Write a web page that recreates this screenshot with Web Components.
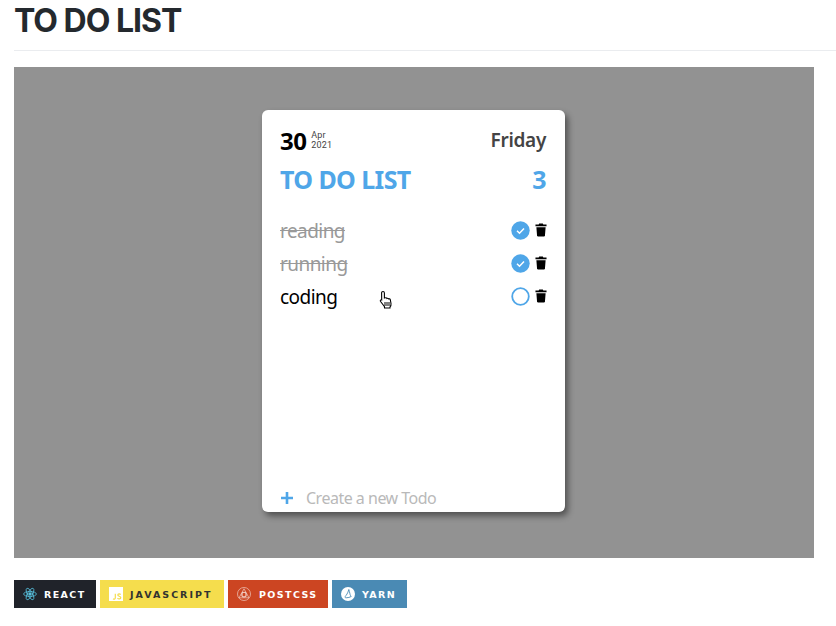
<!DOCTYPE html>
<html>
<head>
<meta charset="utf-8">
<title>To do list</title>
<style>
  html, body { margin: 0; padding: 0; background: #fff; }
  body { overflow: hidden; width: 836px; height: 626px; }
</style>
</head>
<body>
<readme-page>
  <span slot="title">TO DO LIST</span>
  <todo-card slot="demo">
    <todo-item done>reading</todo-item>
    <todo-item done>running</todo-item>
    <todo-item>coding<svg class="hand" slot="cursor" width="18" height="20" viewBox="0 0 16 20"><path d="M5 1.500c1 0 1.400.6 1.400 1.500V8l1-.2c.8-.2 1.300.1 1.500.6.700-.3 1.400-.1 1.700.5.700-.3 1.500 0 1.700.7l.7 3.900c.2 1.300-.2 2.500-1 3.500v1H6.500v-1.300L2.600 11.500c-.7-1-.1-1.800.8-1.700l.3.100-.1-6.900C3.600 2.100 4.100 1.500 5 1.500z" fill="#fff" stroke="#000" stroke-width="1.100"/><path d="M7 12v4M9 12v4M11 12v4" stroke="#000" stroke-width="1"/></svg></todo-item>
  </todo-card>
  <shield-badge slot="badges" color="#20232a" text="#fff" icon="react" width="82">REACT</shield-badge>
  <shield-badge slot="badges" color="#f5dd4d" text="#323330" icon="js" width="124" spacing="2">JAVASCRIPT</shield-badge>
  <shield-badge slot="badges" color="#cc4522" text="#fff" icon="postcss" width="100" gap="8">POSTCSS</shield-badge>
  <shield-badge slot="badges" color="#4a8ab4" text="#fff" icon="yarn" width="75">YARN</shield-badge>
</readme-page>

<script>
class ReadmePage extends HTMLElement {
  constructor () {
    super()
    this.attachShadow({ mode: 'open' })
  }

  connectedCallback () {
    this.shadowRoot.innerHTML = `
      <style>
        :host { display: block; padding-left: 14px; font-family: Inter, "Liberation Sans", sans-serif; }
        h1 {
          margin: 0;
          height: 51px;
          box-sizing: border-box;
          padding-top: 1px;
          border-bottom: 1px solid #eaecef;
          font-size: 32px;
          line-height: 40px;
          font-weight: 700;
          letter-spacing: -1px;
          color: #24292e;
        }
        .demo {
          margin-top: 16px;
          width: 800px;
          height: 491px;
          background: #929292;
          display: flex;
          flex-direction: column;
          padding: 43px 0 0 248px;
          box-sizing: border-box;
        }
        .badges { display: flex; gap: 4px; margin-top: 22px; }
      </style>
      <h1><slot name="title"></slot></h1>
      <div class="demo"><slot name="demo"></slot></div>
      <div class="badges"><slot name="badges"></slot></div>
    `
  }
}

class TodoCard extends HTMLElement {
  constructor () {
    super()
    this.attachShadow({ mode: 'open' })
  }

  connectedCallback () {
    this.shadowRoot.innerHTML = `
      <style>
        :host {
          display: flex;
          flex-direction: column;
          width: 303px;
          height: 402px;
          box-sizing: border-box;
          padding: 0 18px;
          background: #fff;
          border-radius: 6px;
          box-shadow: 3px 4px 6px rgba(0, 0, 0, .45);
          font-family: "Noto Sans", "Open Sans", sans-serif;
          color: #000;
          overflow: hidden;
        }
        .row { display: flex; justify-content: space-between; align-items: center; }
        .date { margin-top: 15px; height: 30px; }
        .day { display: flex; align-items: center; gap: 5px; }
        .num { font-size: 24px; font-weight: 700; letter-spacing: -.6px; }
        .my { font-family: Roboto, "Liberation Sans", sans-serif; font-size: 9px; line-height: 10.500px; color: #444; letter-spacing: .15px; }
        .weekday { font-size: 19px; font-weight: 600; color: #444; letter-spacing: -.3px; margin-right: 1px; }
        .title { margin-top: 6px; height: 36px; color: #4fa6e8; font-size: 25px; font-weight: 700; letter-spacing: -.6px; margin-right: 1px; }
        .list { margin-top: 17px; flex: 1; display: flex; flex-direction: column; }
        .add { display: flex; align-items: center; height: 28px; font-size: 16px; color: #b9b9b9; letter-spacing: -.5px; }
        .add svg { margin-right: 12px; }
      </style>
      <div class="row date">
        <div class="day">
          <span class="num">30</span>
          <div class="my"><div>Apr</div><div>2021</div></div>
        </div>
        <span class="weekday">Friday</span>
      </div>
      <div class="row title"><span>TO DO LIST</span><span>3</span></div>
      <div class="list"><slot></slot></div>
      <div class="add">
        <svg width="14" height="14" viewBox="0 0 14 14"><path d="M7 1v12M1 7h12" stroke="#4fa6e8" stroke-width="2.600"/></svg>
        <span>Create a new Todo</span>
      </div>
    `
  }
}

class TodoItem extends HTMLElement {
  constructor () {
    super()
    this.attachShadow({ mode: 'open' })
  }

  connectedCallback () {
    const done = this.hasAttribute('done')
    const check = done
      ? '<svg width="19" height="19" viewBox="0 0 19 19"><circle cx="9.500" cy="9.500" r="9.200" fill="#4fa6e8"/><path d="M6 9.800l2.500 2.400L13 7.500" fill="none" stroke="#fff" stroke-width="1.500"/></svg>'
      : '<svg width="19" height="19" viewBox="0 0 19 19"><circle cx="9.500" cy="9.500" r="8.300" fill="none" stroke="#4fa6e8" stroke-width="1.800"/></svg>'
    this.shadowRoot.innerHTML = `
      <style>
        :host {
          display: flex;
          align-items: center;
          height: 33px;
          font-size: 19px;
          letter-spacing: -.55px;
          color: ${done ? '#999' : '#000'};
          position: relative;
        }
        .label { flex: 1; text-decoration: ${done ? 'line-through' : 'none'}; }
        .icons { display: flex; align-items: center; gap: 5px; margin-top: -1px; }
        ::slotted(svg) { position: absolute; left: 97px; top: 10px; }
      </style>
      <span class="label"><slot></slot></span>
      <slot name="cursor"></slot>
      <div class="icons">
        ${check}
        <svg width="12" height="14" viewBox="0 0 13 14"><path d="M4.500 0h4l.5 1h3.500v2H.5V1H4zM1.500 4h10l-.7 9c0 .6-.5 1-1 1H3.200c-.5 0-1-.4-1-1z" fill="#000"/></svg>
      </div>
    `
  }
}

const badgeIcons = {
  react: '<svg width="14" height="14" viewBox="0 0 14 14" fill="none" stroke="#61dafb" stroke-width=".8" opacity=".85"><circle cx="7" cy="7" r="1.300" fill="#61dafb"/><ellipse cx="7" cy="7" rx="6.400" ry="2.500"/><ellipse cx="7" cy="7" rx="6.400" ry="2.500" transform="rotate(60 7 7)"/><ellipse cx="7" cy="7" rx="6.400" ry="2.500" transform="rotate(120 7 7)"/></svg>',
  js: '<svg width="14" height="14" viewBox="0 0 14 14"><rect width="14" height="14" fill="#fff"/><path d="M6.300 6.800v4.300c0 1.200-1.400 1.400-2.200.7M11.600 7.600c-.6-1-2.700-1-2.800.4 0 1.500 3 1 3 2.700 0 1.400-2.500 1.500-3.300.4" fill="none" stroke="#f5dd4d" stroke-width="1.200"/></svg>',
  postcss: '<svg width="14" height="14" viewBox="0 0 14 14" fill="none" stroke="#fff" stroke-width=".6" opacity=".85"><circle cx="7" cy="7" r="6.500"/><path d="M7 1.800l5 9H2z"/><circle cx="7" cy="7.700" r="2.600"/><rect x="5.200" y="5.700" width="3.600" height="3.800"/></svg>',
  yarn: '<svg width="14" height="14" viewBox="0 0 14 14"><circle cx="7" cy="7" r="7" fill="#fff"/><path d="M7.800 2.500c.2 1.500.9 2.200 1 3.700.2 1.700.8 2.500 1.400 3.300-1.500.8-3 1.300-5 1.300-1 0-1.500-.5-1-1.200 1-1.500 2.600-3 3.600-7.100z" fill="none" stroke="#4a8ab4" stroke-width=".9"/></svg>'
}

class ShieldBadge extends HTMLElement {
  constructor () {
    super()
    this.attachShadow({ mode: 'open' })
  }

  connectedCallback () {
    const icon = badgeIcons[this.getAttribute('icon')]
    this.shadowRoot.innerHTML = `
      <style>
        :host {
          display: flex;
          align-items: center;
          gap: ${this.getAttribute('gap') || 7}px;
          width: ${this.getAttribute('width')}px;
          box-sizing: border-box;
          height: 28px;
          padding-left: 9px;
          background: ${this.getAttribute('color')};
          color: ${this.getAttribute('text')};
          font-family: "DejaVu Sans", Verdana, sans-serif;
          font-size: 9.500px;
          font-weight: 700;
          letter-spacing: ${this.getAttribute('spacing') || 1.4}px;
        }
        svg { display: block; }
      </style>
      ${icon}
      <slot></slot>
    `
  }
}

customElements.define('readme-page', ReadmePage)
customElements.define('todo-card', TodoCard)
customElements.define('todo-item', TodoItem)
customElements.define('shield-badge', ShieldBadge)
</script>
</body>
</html>
